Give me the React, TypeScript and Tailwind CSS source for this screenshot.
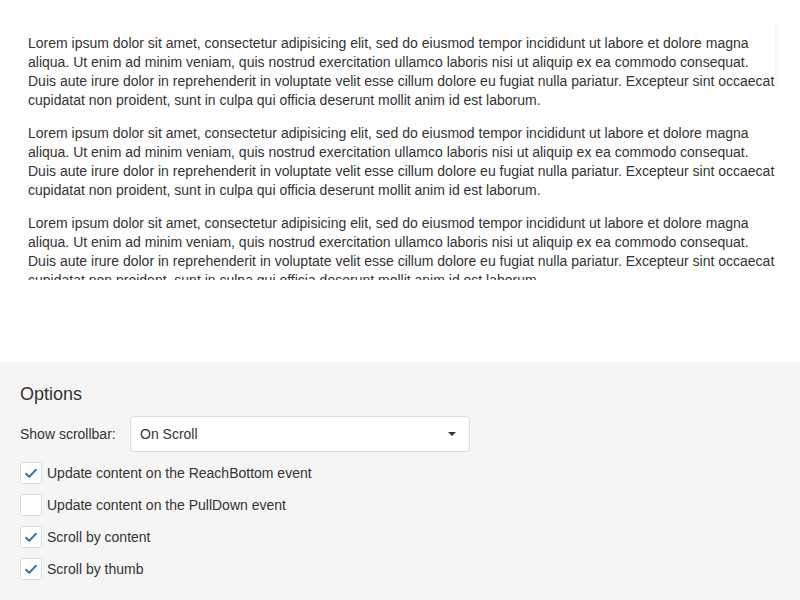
const LOREM =
  'Lorem ipsum dolor sit amet, consectetur adipisicing elit, sed do eiusmod tempor incididunt ut labore et dolore magna aliqua. Ut enim ad minim veniam, quis nostrud exercitation ullamco laboris nisi ut aliquip ex ea commodo consequat. Duis aute irure dolor in reprehenderit in voluptate velit esse cillum dolore eu fugiat nulla pariatur. Excepteur sint occaecat cupidatat non proident, sunt in culpa qui officia deserunt mollit anim id est laborum.';

function Check({ checked, label }: { checked: boolean; label: string }) {
  return (
    <div className="flex items-center h-[22px]">
      <span className="w-[22px] h-[22px] rounded-[2px] border border-[#dddddd] bg-white flex items-center justify-center">
        {checked && (
          <svg width="16" height="16" viewBox="0 0 16 16">
            <path d="M2.5 8.2 L6.2 11.8 L13.5 4.3" fill="none" stroke="#337ab7" strokeWidth="2" />
          </svg>
        )}
      </span>
      <span className="ml-[5px]">{label}</span>
    </div>
  );
}

export default function App() {
  return (
    <div className="w-[800px] h-[600px] bg-white text-[#333] text-[14px] font-['Liberation_Sans',Arial,sans-serif] flex flex-col">
      {/* Scroll view */}
      <div className="pt-[20px] h-[362px]">
        <div className="relative h-[260px] overflow-hidden pl-[28px] pr-[24px]">
          {[0, 1, 2].map((i) => (
            <p key={i} className="mt-[14px] leading-[19px]">
              {LOREM}
            </p>
          ))}
          <div className="absolute right-[22px] top-[2px] w-[3px] h-[66px] bg-[#f7f7f7]" />
        </div>
      </div>

      {/* Options */}
      <div className="flex-1 bg-[#f5f5f5] px-[20px] pt-[21px]">
        <div className="text-[18px] leading-[22px]">Options</div>
        <div className="flex items-center mt-[11px]">
          <span className="w-[110px]">Show scrollbar:</span>
          <div className="w-[340px] h-[36px] bg-white border border-[#dddddd] rounded-[4px] flex items-center justify-between pl-[9px] pr-[13px]">
            <span>On Scroll</span>
            <svg width="8" height="4" viewBox="0 0 8 4">
              <path d="M0 0 H8 L4 4 Z" fill="#333" />
            </svg>
          </div>
        </div>
        <div className="flex flex-col gap-[10px] mt-[10px]">
          <Check checked label="Update content on the ReachBottom event" />
          <Check checked={false} label="Update content on the PullDown event" />
          <Check checked label="Scroll by content" />
          <Check checked label="Scroll by thumb" />
        </div>
      </div>
    </div>
  );
}
